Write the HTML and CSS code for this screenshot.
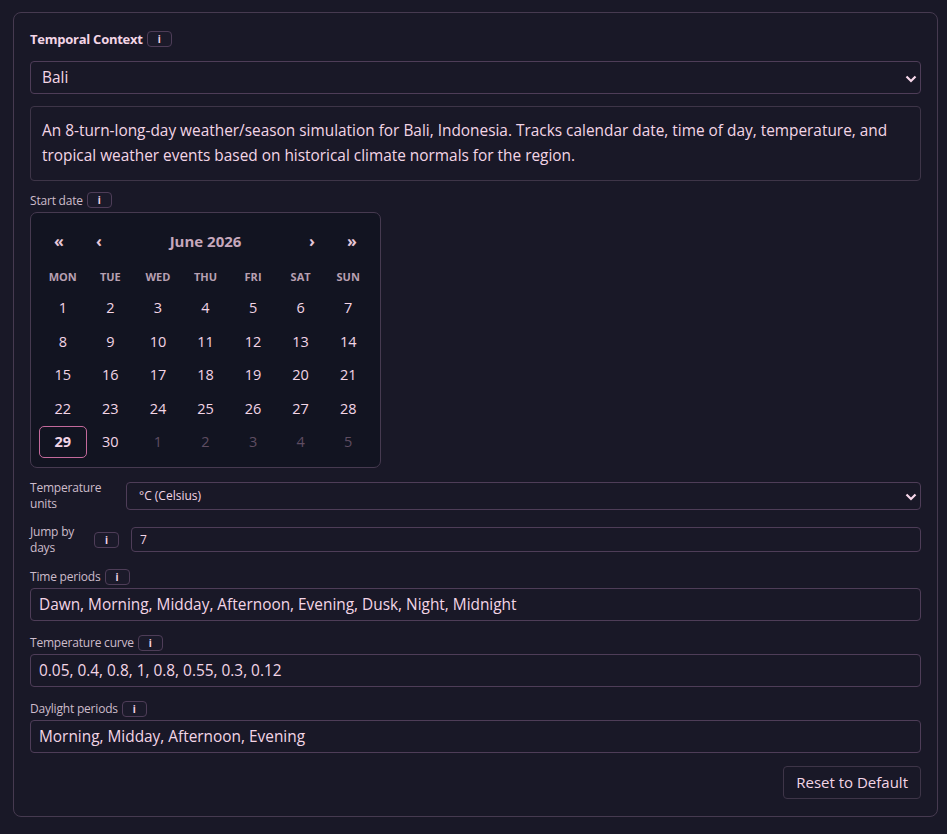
FILE: index.html
```html
<!DOCTYPE html>
<html lang="en">
<head>
  <meta charset="UTF-8" />
  <title>Temporal Context</title>
  <link rel="stylesheet" href="styles.css">
</head>
<body>
  <div class="painel">
    <div class="linha-rotulo titulo-painel">
      <span>Temporal Context</span>
      <span class="info">i</span>
    </div>

    <div class="seletor grande mt-14">
      <select>
        <option>Bali</option>
      </select>
      <svg class="seta" width="12" height="8" viewBox="0 0 12 8"><path d="M1.5 1.5 L6 6 L10.5 1.5" fill="none" stroke="#f7d7ea" stroke-width="2.2"/></svg>
    </div>

    <div class="descricao">
      An 8-turn-long-day weather/season simulation for Bali, Indonesia. Tracks calendar date, time of day, temperature, and tropical weather events based on historical climate normals for the region.
    </div>

    <div class="linha-rotulo rotulo mt-11">
      <span>Start date</span>
      <span class="info">i</span>
    </div>

    <div class="calendario">
      <div class="cal-nav">
        <span class="nav-btn">&laquo;</span>
        <span class="nav-btn">&lsaquo;</span>
        <span class="cal-titulo">June 2026</span>
        <span class="nav-btn">&rsaquo;</span>
        <span class="nav-btn">&raquo;</span>
      </div>
      <div class="cal-grade">
        <span class="dia-semana">MON</span>
        <span class="dia-semana">TUE</span>
        <span class="dia-semana">WED</span>
        <span class="dia-semana">THU</span>
        <span class="dia-semana">FRI</span>
        <span class="dia-semana">SAT</span>
        <span class="dia-semana">SUN</span>

        <span class="dia">1</span><span class="dia">2</span><span class="dia">3</span><span class="dia">4</span><span class="dia">5</span><span class="dia">6</span><span class="dia">7</span>
        <span class="dia">8</span><span class="dia">9</span><span class="dia">10</span><span class="dia">11</span><span class="dia">12</span><span class="dia">13</span><span class="dia">14</span>
        <span class="dia">15</span><span class="dia">16</span><span class="dia">17</span><span class="dia">18</span><span class="dia">19</span><span class="dia">20</span><span class="dia">21</span>
        <span class="dia">22</span><span class="dia">23</span><span class="dia">24</span><span class="dia">25</span><span class="dia">26</span><span class="dia">27</span><span class="dia">28</span>
        <span class="dia selecionado">29</span><span class="dia">30</span><span class="dia fora">1</span><span class="dia fora">2</span><span class="dia fora">3</span><span class="dia fora">4</span><span class="dia fora">5</span>
      </div>
    </div>

    <div class="linha-campo unidades">
      <label class="rotulo rotulo-lado">Temperature units</label>
      <div class="seletor pequeno">
        <select>
          <option>°C (Celsius)</option>
        </select>
        <svg class="seta" width="12" height="8" viewBox="0 0 12 8"><path d="M1.5 1.5 L6 6 L10.5 1.5" fill="none" stroke="#f7d7ea" stroke-width="2.2"/></svg>
      </div>
    </div>

    <div class="linha-campo saltos">
      <label class="rotulo rotulo-curto">Jump by days</label>
      <span class="info">i</span>
      <input class="campo pequeno-campo" type="text" value="7">
    </div>

    <div class="linha-rotulo rotulo mt-13">
      <span>Time periods</span>
      <span class="info">i</span>
    </div>
    <input class="campo texto" type="text" value="Dawn, Morning, Midday, Afternoon, Evening, Dusk, Night, Midnight">

    <div class="linha-rotulo rotulo mt-14">
      <span>Temperature curve</span>
      <span class="info">i</span>
    </div>
    <input class="campo texto" type="text" value="0.05, 0.4, 0.8, 1, 0.8, 0.55, 0.3, 0.12">

    <div class="linha-rotulo rotulo mt-14">
      <span>Daylight periods</span>
      <span class="info">i</span>
    </div>
    <input class="campo texto" type="text" value="Morning, Midday, Afternoon, Evening">

    <div class="rodape">
      <button>Reset to Default</button>
    </div>
  </div>
</body>
</html>
```

FILE: styles.css
```css
body {
  margin: 0;
  padding: 12px 9px 19px 13px;
  background: #191827;
  font-family: "Open Sans", "Noto Sans", sans-serif;
  color: #f3d5e6;
}
.painel {
  border: 1px solid #463a50;
  border-radius: 8px;
  padding: 18px 16px 17px 16px;
  display: flex;
  flex-direction: column;
}
.mt-11 { margin-top: 11px; }
.mt-13 { margin-top: 13px; }
.mt-14 { margin-top: 14px; }

.linha-rotulo {
  display: flex;
  align-items: center;
  gap: 4px;
  height: 16px;
}
.titulo-painel {
  font-size: 13px;
  font-weight: bold;
  letter-spacing: -0.25px;
  color: #f3d5e6;
}
.rotulo {
  font-size: 12px;
  color: #cdbccb;
  letter-spacing: -0.2px;
}
.info {
  display: inline-flex;
  align-items: center;
  justify-content: center;
  width: 23px;
  height: 14px;
  border: 1px solid #4e3d58;
  border-radius: 4px;
  font-size: 10px;
  font-weight: bold;
  letter-spacing: 0;
  color: #f3d5e6;
  background: #1b1a2a;
}

.seletor {
  position: relative;
}
.seletor select {
  width: 100%;
  appearance: none;
  -webkit-appearance: none;
  background: #191827;
  color: #f3d5e6;
  border: 1px solid #4e3d58;
  border-radius: 4px;
  font-family: inherit;
  box-sizing: border-box;
  outline: none;
}
.seletor .seta {
  position: absolute;
  right: 4px;
  top: 50%;
  margin-top: -3px;
  pointer-events: none;
}
.grande select {
  height: 33px;
  font-size: 15.4px;
  padding: 0 11px;
}
.pequeno {
  flex: 1;
}
.pequeno select {
  height: 28px;
  font-size: 12px;
  padding: 0 12px;
}

.descricao {
  margin-top: 12px;
  border: 1px solid #3e3548;
  border-radius: 4px;
  padding: 11px 11px 12px 11px;
  font-size: 15.4px;
  line-height: 25px;
  color: #f3d5e6;
}

.calendario {
  margin-top: 4px;
  width: 333px;
  padding: 8px;
  background: #121421;
  border: 1px solid #463a50;
  border-radius: 7px;
}
.cal-nav {
  display: flex;
  align-items: center;
  height: 40px;
}
.nav-btn {
  width: 40px;
  text-align: center;
  font-size: 16px;
  font-weight: bold;
  color: #e5c7d8;
}
.cal-titulo {
  flex: 1;
  text-align: center;
  font-size: 15px;
  font-weight: bold;
  color: #c6a8bc;
}
.cal-grade {
  display: grid;
  grid-template-columns: repeat(7, 1fr);
  grid-template-rows: 30px;
  grid-auto-rows: 33.5px;
}
.dia-semana {
  display: flex;
  align-items: center;
  justify-content: center;
  font-size: 11px;
  font-weight: bold;
  color: #b8a0b2;
}
.dia {
  display: flex;
  align-items: center;
  justify-content: center;
  font-size: 14.5px;
  font-weight: 500;
  color: #f3d5e6;
  border-radius: 5px;
  margin: 0.5px 0 1px 0;
}
.dia.selecionado {
  border: 1px solid #c46a9c;
  font-weight: bold;
}
.dia.fora {
  color: #5f4d62;
  font-weight: normal;
}

.linha-campo {
  display: flex;
  align-items: center;
}
.unidades {
  margin-top: 12px;
}
.saltos {
  margin-top: 12px;
}
.rotulo-lado {
  width: 84px;
  margin-right: 12px;
  line-height: 16px;
}
.rotulo-curto {
  width: 58px;
  margin-right: 6px;
  line-height: 16px;
}
.saltos .info {
  margin-right: 12px;
}
.campo {
  background: #191827;
  color: #f3d5e6;
  border: 1px solid #4e3d58;
  border-radius: 4px;
  font-family: inherit;
  box-sizing: border-box;
  outline: none;
}
.pequeno-campo {
  flex: 1;
  height: 25px;
  font-size: 12px;
  padding: 0 8px;
}
.texto {
  margin-top: 3px;
  width: 100%;
  height: 33px;
  font-size: 15.4px;
  padding: 0 8px;
}

.rodape {
  display: flex;
  justify-content: flex-end;
  margin-top: 13px;
}
button {
  height: 33px;
  padding: 0 12px;
  background: #191827;
  color: #f3d5e6;
  border: 1px solid #3e3548;
  border-radius: 4px;
  font-family: inherit;
  font-size: 15px;
}
```
